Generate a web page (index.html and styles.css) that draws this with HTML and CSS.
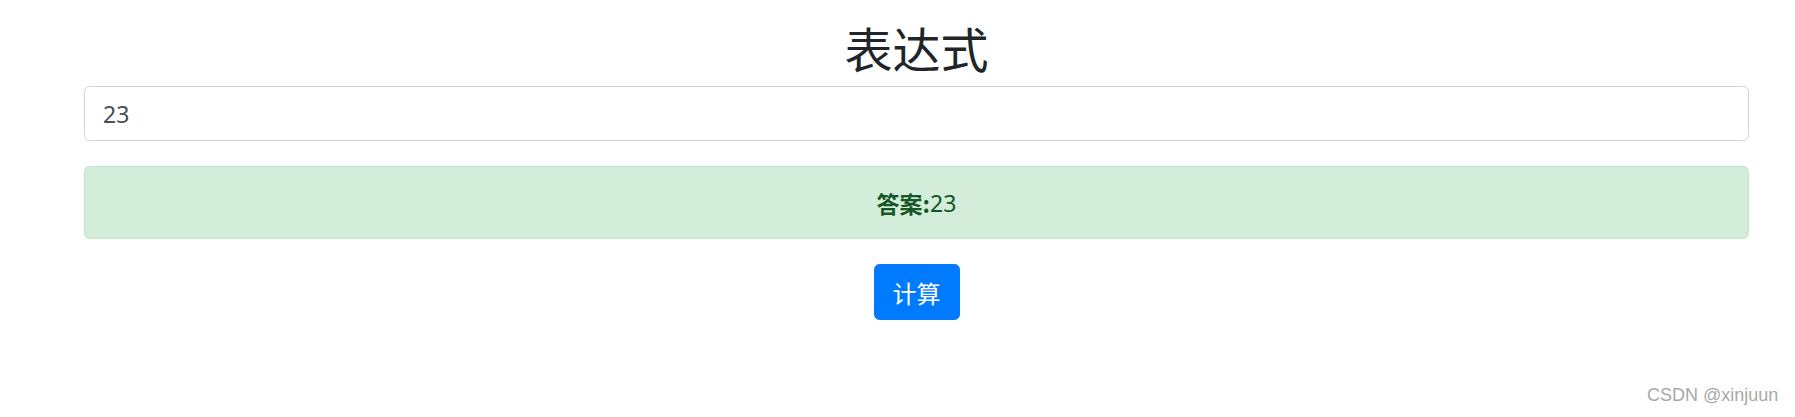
FILE: index.html
```html
<!DOCTYPE html>
<html lang="zh">
<head>
<meta charset="utf-8">
<title>表达式</title>
<link rel="stylesheet" href="styles.css">
</head>
<body>
<div class="container">
  <h1 class="title">表达式</h1>
  <input class="expr" type="text" value="23">
  <div class="alert"><b>答案:</b>23</div>
  <div class="actions"><button class="btn">计算</button></div>
</div>
<div class="watermark">CSDN @xinjuun</div>
</body>
</html>
```

FILE: styles.css
```css
html, body {
  margin: 0;
  padding: 0;
  background: #fff;
}
body {
  width: 1795px;
  height: 417px;
  position: relative;
  overflow: hidden;
  font-family: "Noto Sans", "Noto Sans CJK SC", sans-serif;
  color: #212529;
}
.container {
  width: 1665px;
  margin-left: 84px;
  display: flex;
  flex-direction: column;
}
.title {
  margin: 20px 0 11px;
  font-size: 48px;
  line-height: 55px;
  font-weight: 400;
  text-align: center;
  font-family: "Noto Sans CJK SC", sans-serif;
  color: #212529;
}
.expr {
  box-sizing: border-box;
  height: 55px;
  width: 100%;
  margin: 0;
  padding: 0 18px;
  border: 1px solid #ced4da;
  border-radius: 5.5px;
  font-family: "Noto Sans", "Noto Sans CJK SC", sans-serif;
  font-size: 23px;
  color: #495057;
  background: #fff;
  outline: none;
}
.alert {
  box-sizing: border-box;
  margin-top: 25px;
  height: 73px;
  display: flex;
  align-items: center;
  justify-content: center;
  background: #d4edda;
  border: 1px solid #c3e6cb;
  border-radius: 5.5px;
  color: #155724;
  font-size: 23px;
  font-family: "Noto Sans", "Noto Sans CJK SC", sans-serif;
}
.alert b {
  font-weight: 700;
  font-family: "Noto Sans CJK SC", sans-serif;
}
.actions {
  margin-top: 25px;
  display: flex;
  justify-content: center;
}
.btn {
  box-sizing: border-box;
  height: 56px;
  width: 86px;
  padding: 0;
  border: 1px solid #007bff;
  border-radius: 5.5px;
  background: #007bff;
  color: #fff;
  font-size: 24px;
  font-family: "Noto Sans CJK SC", sans-serif;
  cursor: pointer;
}
.watermark {
  position: absolute;
  left: 1647px;
  top: 384px;
  font-family: "Liberation Sans", Arial, sans-serif;
  font-size: 18px;
  line-height: 22px;
  color: #a8a8a8;
  white-space: nowrap;
}
```
